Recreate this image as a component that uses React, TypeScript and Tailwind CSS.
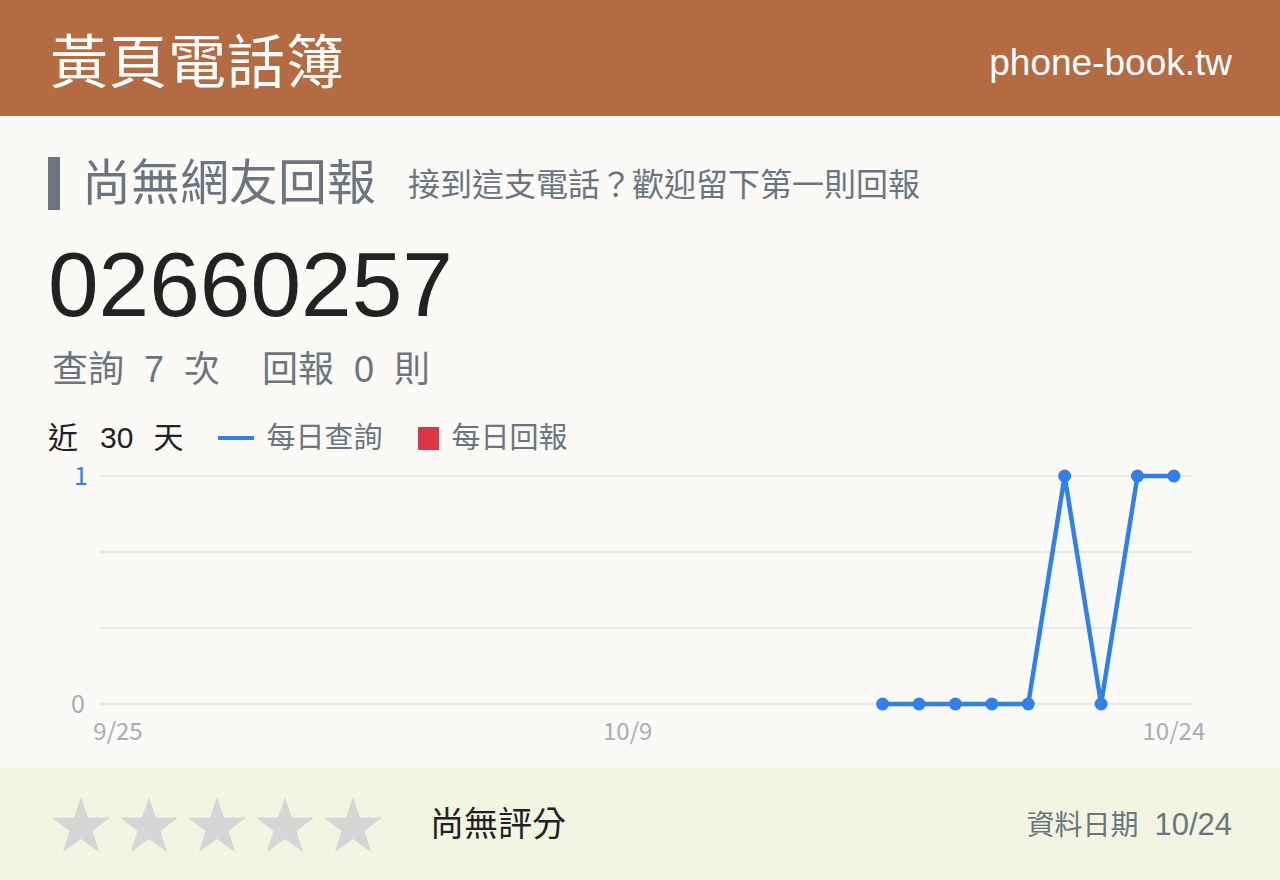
import React from "react";

// daily lookups for the last 30 days; null = no data that day
const DAYS = 30;
const lookups: (number | null)[] = [
  ...Array(21).fill(null),
  0, 0, 0, 0, 0, 1, 0, 1, 1,
];

const CHART_W = 1184;
const CHART_H = 300;
const X0 = 70;
const STEP = 36.41;
const Y_TOP = 24;
const Y_BOTTOM = 252;

const px = (i: number) => X0 + i * STEP;
const py = (v: number) => Y_BOTTOM - v * (Y_BOTTOM - Y_TOP);

const Star = () => (
  <svg width="58" height="56" viewBox="0 0 58 56">
    <polygon
      points="29,1 36,21.5 58,21.5 40.5,35 47,56 29,43 11,56 17.5,35 0,21.5 22,21.5"
      fill="#d6d6d6"
    />
  </svg>
);

const TrendChart = () => {
  const pts = lookups
    .map((v, i) => (v === null ? null : { x: px(i), y: py(v) }))
    .filter((p): p is { x: number; y: number } => p !== null);
  const grid = [0, 1, 2, 3].map((k) => Y_TOP + k * ((Y_BOTTOM - Y_TOP) / 3));
  const font = "'Noto Sans CJK TC', sans-serif";

  return (
    <svg width={CHART_W} height={CHART_H} className="block">
      {grid.map((y) => (
        <line key={y} x1={52} x2={1144} y1={y} y2={y} stroke="#e6e8ec" strokeWidth={2} />
      ))}
      <text x={40} y={Y_TOP + 9} textAnchor="end" fontSize={25} fill="#2f80ed" fontFamily={font}>
        1
      </text>
      <text x={37} y={Y_BOTTOM + 9} textAnchor="end" fontSize={25} fill="#a8aeb5" fontFamily={font}>
        0
      </text>
      {[
        { i: 0, label: "9/25" },
        { i: 14, label: "10/9" },
        { i: DAYS - 1, label: "10/24" },
      ].map(({ i, label }) => (
        <text
          key={label}
          x={px(i)}
          y={Y_BOTTOM + 36}
          textAnchor="middle"
          fontSize={24}
          fill="#a8aeb5"
          fontFamily={font}
        >
          {label}
        </text>
      ))}
      <polyline
        points={pts.map((p) => `${p.x},${p.y}`).join(" ")}
        fill="none"
        stroke="#2f80ed"
        strokeWidth={4.5}
        strokeLinejoin="round"
      />
      {pts.map((p) => (
        <circle key={p.x} cx={p.x} cy={p.y} r={6.5} fill="#2f80ed" />
      ))}
    </svg>
  );
};

export default function App() {
  return (
    <div
      className="w-[1280px] h-[880px] flex flex-col bg-[#fbfaf6] overflow-hidden"
      style={{ fontFamily: "'Liberation Sans', 'Noto Sans CJK TC', sans-serif" }}
    >
      {/* Top bar */}
      <header className="h-[116px] shrink-0 bg-[#b56b41] flex items-center justify-between px-12 pt-[9px] text-white">
        <h1 className="text-[58px] leading-none tracking-[1px] ml-[2px]">黃頁電話簿</h1>
        <span className="text-[37px] leading-none">phone-book.tw</span>
      </header>

      {/* Number summary */}
      <main className="flex-1 px-12 pt-[34px]">
        <div className="h-[66px] flex items-center">
          <div className="w-[12px] h-[53px] bg-[#6c757d]" />
          <h2 className="ml-[22px] text-[49px] leading-none text-[#6c757d]">尚無網友回報</h2>
          <span className="ml-[32px] text-[32px] leading-none text-[#6c757d] mt-[4px]">
            接到這支電話？歡迎留下第一則回報
          </span>
        </div>

        <div className="mt-[18px] h-[100px] flex items-center text-[91px] leading-none text-[#222222]">
          02660257
        </div>

        <div className="mt-[3px] h-[66px] flex items-center pl-[4px] text-[36px] leading-none text-[#6c757d] gap-[20px]">
          <span>查詢</span>
          <span>7</span>
          <span>次</span>
          <span className="ml-[22px]">回報</span>
          <span>0</span>
          <span>則</span>
        </div>

        <div className="h-[70px] flex items-center">
          <span className="text-[30px] leading-none text-[#222222]">
            近<span className="ml-[22px] mr-[20px]">30</span>天
          </span>
          <span className="ml-[35px] w-[36px] h-[4px] bg-[#2f80ed]" />
          <span className="ml-[12px] text-[29px] leading-none text-[#6c757d]">每日查詢</span>
          <span className="ml-[36px] w-[21px] h-[23px] bg-[#dc3545]" />
          <span className="ml-[12px] text-[29px] leading-none text-[#6c757d]">每日回報</span>
        </div>

        <div className="-mt-[21px]">
          <TrendChart />
        </div>
      </main>

      {/* Rating + data date */}
      <footer className="h-[112px] shrink-0 bg-[#f2f5e2] flex items-center px-12">
        <div className="flex gap-[10px] pl-[4px]">
          {Array.from({ length: 5 }).map((_, i) => (
            <Star key={i} />
          ))}
        </div>
        <span className="ml-[48px] text-[34px] leading-none text-[#222222]">尚無評分</span>
        <div className="ml-auto flex items-baseline text-[#6c757d]">
          <span className="text-[28px] leading-none">資料日期</span>
          <span className="ml-[16px] text-[31px] leading-none">10/24</span>
        </div>
      </footer>
    </div>
  );
}
